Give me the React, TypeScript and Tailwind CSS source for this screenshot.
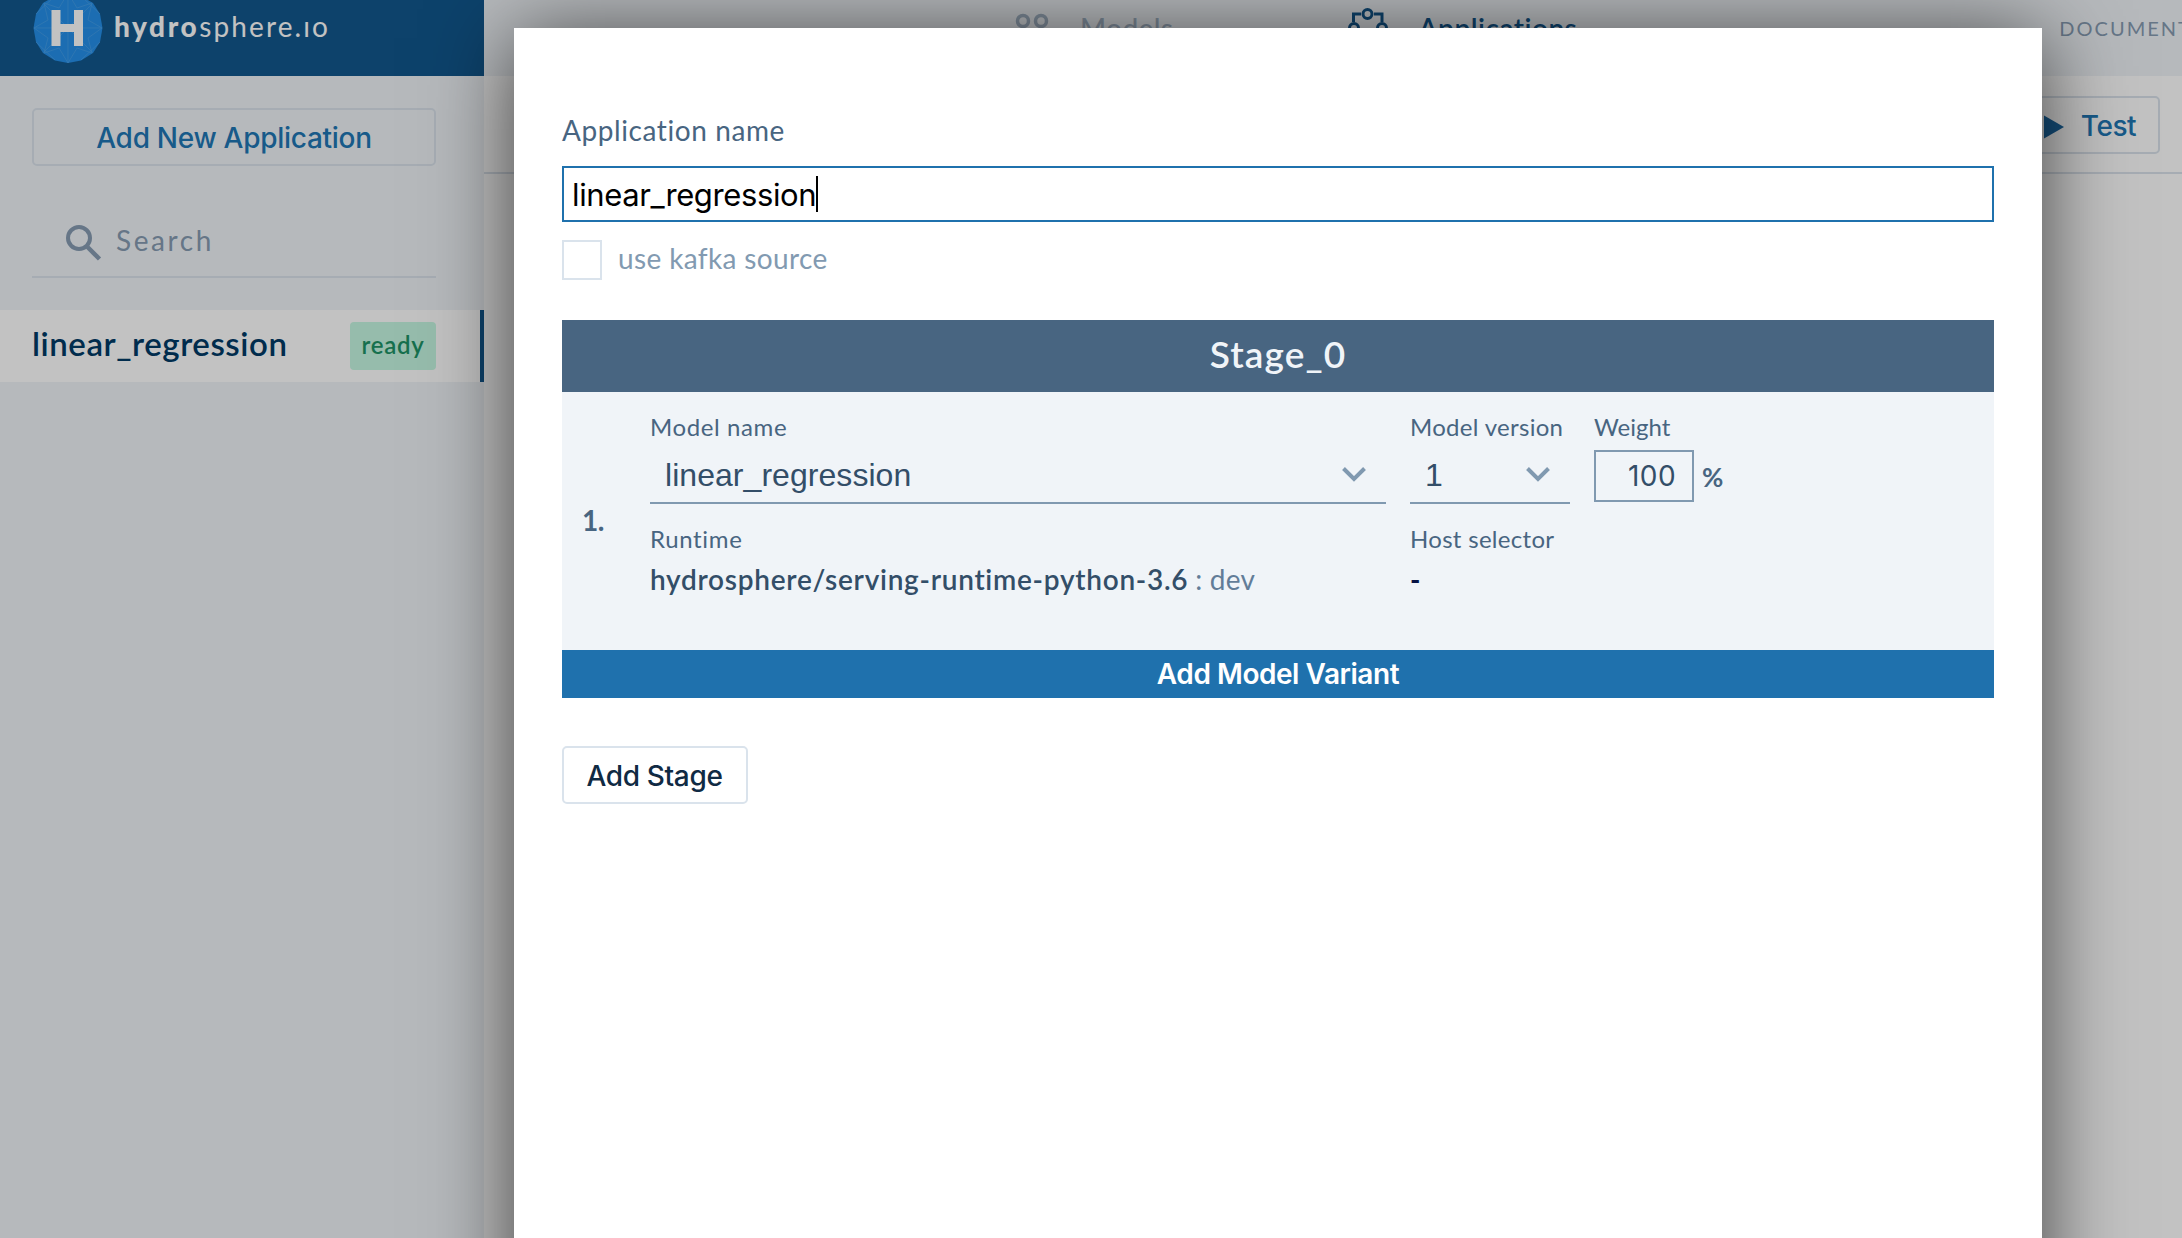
import React from "react";

function LogoMark() {
  return (
    <svg width="70" height="70" viewBox="-35 -35 70 70" className="shrink-0">
      <path
        d="M0-35 13-32 25-25 32-14 34.500 0 32 14 25 25 13 32.500 0 35-13 32.500-25 25-32 14-34.500 0-32-14-25-25-13-32Z"
        fill="#2590ea"
      />
      <path
        d="M0-35V35M-34 0H34M-24-24 24 24M24-24-24 24M-32-14-13-32M32-14 13-32M-32 14-13 32M32 14 13 32M-20-8-34 0-20 10-24 25-9 20 0 35 9 20 24 25 20 10 34 0 20-8 24-25 9-20 0-35-9-20-24-25Z"
        fill="none"
        stroke="#4fa4ea"
        strokeWidth="1"
        opacity=".6"
      />
      <path d="M-16.500-18h9V-4H6v-14h9v36H6V4H-7.500v14h-9Z" fill="#fff" />
    </svg>
  );
}

function Chevron() {
  return (
    <svg width="24" height="15" viewBox="0 0 24 15" fill="none" stroke="#8099b0" strokeWidth="4">
      <path d="M1.500 1.500 12 12 22.500 1.500" />
    </svg>
  );
}

function SearchIcon() {
  return (
    <svg width="36" height="36" viewBox="0 0 36 36" fill="none" stroke="#869bb2">
      <circle cx="13" cy="13" r="11" strokeWidth="4" />
      <path d="M21.500 22 33.500 34" strokeWidth="4.500" />
    </svg>
  );
}

function Sidebar() {
  return (
    <aside className="flex w-[484px] shrink-0 flex-col bg-[#f0f4f8]">
      <div className="flex h-[76px] items-start gap-[11px] overflow-hidden bg-[#12578d] pl-[33px]">
        <div className="-mt-[7px]">
          <LogoMark />
        </div>
        <div className="whitespace-nowrap text-[28px] leading-[53px] text-white">
          <span className="font-black tracking-[2.6px]">hydro</span>
          <span className="tracking-[2.1px]">sphere.ıo</span>
        </div>
      </div>
      <button className="mx-8 mt-8 h-[58px] w-[404px] rounded-[5px] border-2 border-[#dae3ec] pt-0.5 font-[Inter] text-[28px] font-medium tracking-[-0.28px] text-[#2077b5]">
        Add New Application
      </button>
      <div className="ml-8 mt-[38px] flex h-[74px] w-[404px] items-center gap-[14px] border-b-2 border-[#dae3ec] pl-[34px]">
        <div className="pt-1.5">
          <SearchIcon />
        </div>
        <span className="text-[28px] leading-9 tracking-[2.6px] text-[#869bb2]">Search</span>
      </div>
      <div className="mt-8 flex h-[72px] items-center justify-between border-r-4 border-[#12578d] bg-white pl-8 pr-11">
        <span className="pb-[5px] text-[33px] font-semibold tracking-[0.55px] text-[#003a66]">linear_regression</span>
        <span className="h-12 w-[86px] rounded-[4px] bg-[#c6f7e2] text-center text-[24px] font-semibold leading-[46px] tracking-[0.7px] text-[#1d9467]">
          ready
        </span>
      </div>
    </aside>
  );
}

function ModelsIcon() {
  return (
    <svg width="36" height="36" viewBox="0 0 36 36" fill="none" stroke="#a3b4c6" strokeWidth="3.500">
      <circle cx="9" cy="9" r="5.500" />
      <circle cx="27" cy="9" r="5.500" />
      <circle cx="9" cy="27" r="5.500" />
      <circle cx="27" cy="27" r="5.500" />
    </svg>
  );
}

function ApplicationsIcon() {
  return (
    <svg width="42" height="36" viewBox="0 0 42 36" fill="none" stroke="#12578d" strokeWidth="3">
      <circle cx="20.500" cy="6" r="4.500" />
      <circle cx="7" cy="20" r="4.500" />
      <circle cx="35" cy="20" r="4.500" />
      <path d="M14 6H6.500v8M27 6h8v8" />
    </svg>
  );
}

function Background() {
  return (
    <div className="flex h-full w-full">
      <Sidebar />
      <div className="flex min-w-0 grow flex-col">
        <header className="flex h-[76px] shrink-0 items-start overflow-hidden bg-[#f0f4f8] whitespace-nowrap">
          <div className="ml-[530px] flex w-[162px] text-[28px] font-medium">
            <div className="mt-3">
              <ModelsIcon />
            </div>
            <span className="ml-[30px] mt-2.5 leading-9 tracking-[0.4px] text-[#a3b4c6]">Models</span>
          </div>
          <div className="ml-[174px] flex w-[230px] text-[28px] font-semibold">
            <div className="mt-2">
              <ApplicationsIcon />
            </div>
            <span className="ml-[29px] mt-2.5 leading-9 tracking-[0.5px] text-[#12578d]">Applications</span>
          </div>
          <span className="ml-[482px] text-[20px] leading-[56px] tracking-[2px] text-[#869bb2]">DOCUMENT</span>
        </header>
        <div className="flex h-[98px] shrink-0 items-start justify-end border-b-2 border-[#dae3ec] bg-white pr-[22px] pt-5">
          <button className="flex h-[58px] items-center rounded-[5px] border-2 border-[#dae3ec] pl-6 pr-[22px] pt-0.5 font-[Inter] text-[28px] font-medium tracking-[-0.5px] text-[#2077b5]">
            <svg width="20" height="24" viewBox="0 0 20 24" fill="#1b68a3" className="mr-[17px] mt-0.5">
              <path d="M0 .5 20 12 0 23.500Z" />
            </svg>
            Test
          </button>
        </div>
        <div className="grow bg-white" />
      </div>
    </div>
  );
}

function FieldLabel({ children }: { children: React.ReactNode }) {
  return <div className="whitespace-nowrap text-[24px] leading-7 text-[#486581]">{children}</div>;
}

function Select({ value }: { value: string }) {
  return (
    <div className="mt-[5px] flex h-[58px] items-center justify-between border-b-2 border-[#8099b0] pl-[15px] pr-5 font-['Liberation_Sans'] text-[32px] leading-9 tracking-[0.05px] text-[#334e68]">
      <span className="pt-px">{value}</span>
      <Chevron />
    </div>
  );
}

function Stage() {
  return (
    <section className="mt-10">
      <h2 className="flex h-[72px] items-center justify-center bg-[#486581] pb-1 text-[37px] font-semibold tracking-[1.1px] text-[#f0f4f8]">
        Stage_0
      </h2>
      <div className="flex h-[258px] bg-[#f0f4f8]">
        <div className="flex w-[88px] items-center pb-[3px] pl-5 text-[28px] font-bold tracking-[-0.5px] text-[#486581]">1.</div>
        <div className="grid grid-cols-[736px_160px_130px] content-start gap-x-6 pt-[21px]">
          <div>
            <FieldLabel>
              <span className="tracking-[0.6px]">Model name</span>
            </FieldLabel>
            <Select value="linear_regression" />
          </div>
          <div>
            <FieldLabel>
              <span className="tracking-[0.3px]">Model version</span>
            </FieldLabel>
            <Select value="1" />
          </div>
          <div>
            <FieldLabel>Weight</FieldLabel>
            <div className="mt-[9px] flex items-center gap-2">
              <div className="flex h-[52px] w-[100px] items-center justify-end border-2 border-[#8099b0] pr-4 font-[Inter] text-[28px] tracking-[0.4px] text-[#334e68]">
                100
              </div>
              <span className="pt-[3px] text-[26px] font-bold text-[#486581]">%</span>
            </div>
          </div>
          <div className="mt-[21px]">
            <FieldLabel>
              <span className="tracking-[0.65px]">Runtime</span>
            </FieldLabel>
            <div className="mt-[9px] whitespace-nowrap text-[28px] leading-[35px] tracking-[0.73px] text-[#334e68]">
              <span className="font-semibold">hydrosphere/serving-runtime-python-3.6</span>
              <span className="ml-[7px] tracking-[0.2px] text-[#627d98]">: dev</span>
            </div>
          </div>
          <div className="mt-[21px]">
            <FieldLabel>
              <span className="tracking-[0.3px]">Host selector</span>
            </FieldLabel>
            <div className="mt-[9px] text-[28px] font-bold leading-[34px] text-[#061244]">-</div>
          </div>
        </div>
      </div>
      <button className="block h-12 w-full bg-[#1f71ad] font-[Inter] text-[28px] font-semibold tracking-[-0.45px] text-white">
        Add Model Variant
      </button>
    </section>
  );
}

function ApplicationDialog() {
  return (
    <div className="mx-auto mt-7 h-[1400px] w-[1528px] translate-x-[187px] bg-white px-12 pt-[82px] shadow-[0_10px_80px_rgba(0,0,0,0.67)]">
      <div className="text-[28px] leading-10 tracking-[0.59px] text-[#486581]">Application name</div>
      <div className="mt-4 flex h-14 items-center border-2 border-[#1f71ad] pl-2 font-[Inter] text-[31px] leading-9 tracking-[-0.37px] text-black">
        <span className="pt-0.5">linear_regression</span>
        <span className="h-9 w-0.5 bg-black" />
      </div>
      <div className="mt-[18px] flex h-10 items-start gap-4">
        <span className="h-10 w-10 border-2 border-[#dae3ec]" />
        <span className="text-[28px] leading-[36px] tracking-[0.36px] text-[#829ab1]">use kafka source</span>
      </div>
      <Stage />
      <button className="mt-12 h-[58px] w-[186px] rounded-[5px] border-2 border-[#dae3ec] pr-2 pt-0.5 pl-[7px] font-[Inter] text-[28px] font-medium tracking-[-0.34px] text-[#102a43]">
        Add Stage
      </button>
    </div>
  );
}

export default function App() {
  return (
    <div className="relative h-[1238px] w-[2182px] overflow-hidden bg-white font-[Lato]">
      <Background />
      <div className="absolute inset-0 overflow-hidden bg-black/24">
        <ApplicationDialog />
      </div>
    </div>
  );
}
